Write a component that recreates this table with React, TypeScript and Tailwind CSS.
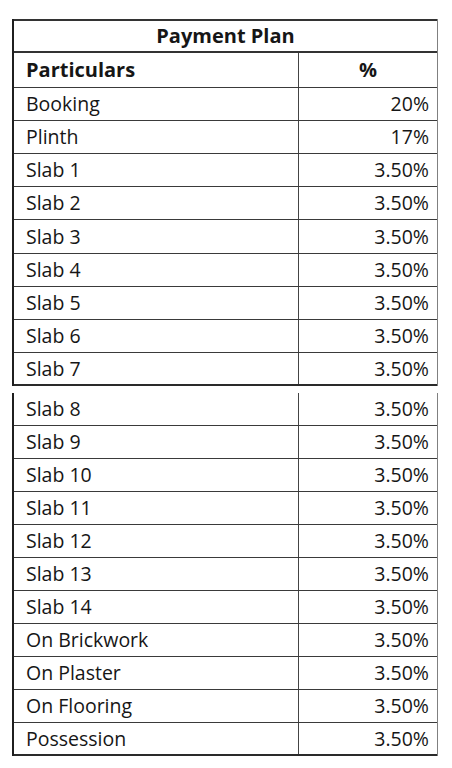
const firstPart = [
  ['Booking', '20%'],
  ['Plinth', '17%'],
  ['Slab 1', '3.50%'],
  ['Slab 2', '3.50%'],
  ['Slab 3', '3.50%'],
  ['Slab 4', '3.50%'],
  ['Slab 5', '3.50%'],
  ['Slab 6', '3.50%'],
  ['Slab 7', '3.50%'],
];

const secondPart = [
  ['Slab 8', '3.50%'],
  ['Slab 9', '3.50%'],
  ['Slab 10', '3.50%'],
  ['Slab 11', '3.50%'],
  ['Slab 12', '3.50%'],
  ['Slab 13', '3.50%'],
  ['Slab 14', '3.50%'],
  ['On Brickwork', '3.50%'],
  ['On Plaster', '3.50%'],
  ['On Flooring', '3.50%'],
  ['Possession', '3.50%'],
];

function Row({ label, value, last, tall }: { label: string; value: string; last?: boolean; tall?: boolean }) {
  return (
    <div
      className={`flex ${tall ? 'h-[34px]' : 'h-[33px]'} ${
        last ? 'border-b-2 border-[#2a2a2a]' : 'border-b border-[#3a3a3a]'
      }`}
    >
      <div className="w-[285px] flex items-center pl-[12px] border-r border-[#444]">{label}</div>
      <div className="flex-1 flex items-center justify-end pr-[8px]">{value}</div>
    </div>
  );
}

export default function App() {
  return (
    <div
      className="min-h-[768px] bg-white pt-[19px] pl-[12px] text-[19.5px] text-[#161616]"
      style={{ fontFamily: '"Open Sans", "Noto Sans", sans-serif' }}
    >
      <div className="w-[426px] border-l-2 border-r border-l-[#1f1f1f] border-r-[#808080]">
        <div className="h-[34px] flex items-center justify-center font-bold text-[20px] border-t-2 border-b-2 border-[#333]">
          Payment Plan
        </div>
        <div className="flex h-[35px] font-bold text-[20px] border-b border-[#3a3a3a]">
          <div className="w-[285px] flex items-center pl-[12px] border-r border-[#444]">Particulars</div>
          <div className="flex-1 flex items-center justify-center">%</div>
        </div>
        {firstPart.map(([label, value], i) => (
          <Row key={label} label={label} value={value} tall={i === 4} last={i === firstPart.length - 1} />
        ))}
      </div>
      <div className="w-[426px] mt-[7px] border-l-2 border-r border-l-[#1f1f1f] border-r-[#808080]">
        {secondPart.map(([label, value], i) => (
          <Row key={label} label={label} value={value} last={i === secondPart.length - 1} />
        ))}
      </div>
    </div>
  );
}
